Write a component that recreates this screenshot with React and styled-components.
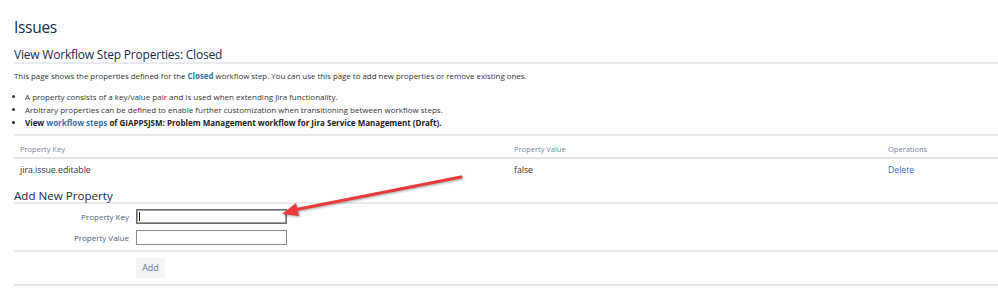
import React from 'react';
import styled, { createGlobalStyle } from 'styled-components';

const GlobalStyle = createGlobalStyle`
	html, body {
		margin: 0;
		padding: 0;
		background: #fff;
	}
	body {
		font-family: 'Open Sans', 'Noto Sans', sans-serif;
		color: #333;
	}
`;

const Page = styled.div`
	position: relative;
	padding: 17px 0 0 14px;
	width: 984px;
	height: 280px;
	overflow: hidden;
`;

const Title = styled.h1`
	margin: 0;
	font-size: 15.5px;
	line-height: 20px;
	letter-spacing: -0.3px;
	font-weight: 400;
	color: #172b4d;
`;

const SectionHeading = styled.h2`
	margin: 11px 0 0;
	font-size: 12px;
	line-height: 14px;
	letter-spacing: -0.2px;
	font-weight: 400;
	color: #172b4d;
	border-bottom: 2px solid #e9eaed;
`;

const Description = styled.p`
	margin: 6px 0 0;
	font-size: 7.9px;
	line-height: 12px;
`;

const Link = styled.a`
	color: #3572b0;
	font-weight: ${(p) => (p.bold ? 700 : 400)};
	text-decoration: none;
`;

const Notes = styled.ul`
	margin: 8px 0 0;
	padding: 0 0 0 11px;
	font-size: 8px;
	line-height: 13px;
`;

const Note = styled.li`
	font-weight: ${(p) => (p.strong ? 700 : 400)};
	color: ${(p) => (p.strong ? '#222' : '#333')};
`;

const Table = styled.table`
	margin-top: 5px;
	width: 984px;
	border-collapse: collapse;
	border-top: 2px solid #e9eaed;
`;

const HeadCell = styled.th`
	text-align: left;
	font-weight: 400;
	font-size: 7.5px;
	line-height: 11px;
	color: #7a869a;
	padding: 8px 6px 2px;
	border-bottom: 2px solid #e4e5e9;
`;

const Cell = styled.td`
	font-size: 8.7px;
	line-height: 13px;
	padding: 5px 6px 13px;
	vertical-align: top;
`;

const Subheading = styled.h3`
	margin: 0;
	font-size: 11.6px;
	line-height: 12px;
	font-weight: 400;
	color: #172b4d;
	border-bottom: 2px solid #e9eaed;
`;

const Form = styled.form`
	display: grid;
	grid-template-columns: 115px 151px;
	column-gap: 7px;
	row-gap: 6px;
	align-items: center;
	padding-top: 5px;
`;

const Label = styled.label`
	text-align: right;
	font-size: 8px;
	line-height: 12px;
	color: #505f79;
`;

const Field = styled.input`
	display: block;
	box-sizing: border-box;
	width: 151px;
	height: 15px;
	margin: 0;
	padding: 0 2px;
	font: inherit;
	border: 1px solid ${(p) => (p.focused ? '#6b6b6b' : '#8a8a8a')};
	box-shadow: ${(p) => (p.focused ? 'inset 0 0 0 1px #a0a0a0' : 'none')};
	outline: none;
	background: #fff;
`;

const Caret = styled.span`
	position: absolute;
	left: 3px;
	top: 3px;
	width: 1px;
	height: 9px;
	background: #222;
`;

const FieldWrap = styled.div`
	position: relative;
	height: 15px;
`;

const Divider = styled.div`
	margin-top: 5px;
	border-top: 2px solid #e9eaed;
`;

const Actions = styled.div`
	padding: 6px 0 6px 122px;
	border-bottom: 2px solid #e4e5e9;
	line-height: 0;
`;

const Button = styled.button`
	width: 29px;
	height: 20px;
	border: 0;
	border-radius: 2px;
	background: #f4f5f7;
	color: #6b778c;
	font-family: inherit;
	font-size: 9px;
	line-height: 20px;
	padding: 0;
`;

const Arrow = styled.svg`
	position: absolute;
	left: 0;
	top: 0;
	filter: drop-shadow(1px 1px 1px rgba(0, 0, 0, 0.35));
	pointer-events: none;
`;

export default function App() {
	return (
		<>
			<GlobalStyle />
			<Page>
				<Title>Issues</Title>
				<SectionHeading>View Workflow Step Properties: Closed</SectionHeading>
				<Description>
					This page shows the properties defined for the <Link bold>Closed</Link> workflow step. You can
					use this page to add new properties or remove existing ones.
				</Description>
				<Notes>
					<Note>A property consists of a key/value pair and is used when extending Jira functionality.</Note>
					<Note>
						Arbitrary properties can be defined to enable further customization when transitioning between
						workflow steps.
					</Note>
					<Note strong>
						View <Link bold>workflow steps</Link> of GIAPPSJSM: Problem Management workflow for Jira Service
						Management (Draft).
					</Note>
				</Notes>
				<Table>
					<colgroup>
						<col style={{ width: 494 }} />
						<col style={{ width: 374 }} />
						<col />
					</colgroup>
					<thead>
						<tr>
							<HeadCell>Property Key</HeadCell>
							<HeadCell>Property Value</HeadCell>
							<HeadCell>Operations</HeadCell>
						</tr>
					</thead>
					<tbody>
						<tr>
							<Cell>jira.issue.editable</Cell>
							<Cell>false</Cell>
							<Cell>
								<Link>Delete</Link>
							</Cell>
						</tr>
					</tbody>
				</Table>
				<Subheading>Add New Property</Subheading>
				<Form onSubmit={(e) => e.preventDefault()}>
					<Label htmlFor="propertyKey">Property Key</Label>
					<FieldWrap>
						<Field id="propertyKey" focused />
						<Caret />
					</FieldWrap>
					<Label htmlFor="propertyValue">Property Value</Label>
					<FieldWrap>
						<Field id="propertyValue" />
					</FieldWrap>
				</Form>
				<Divider />
				<Actions>
					<Button type="button">Add</Button>
				</Actions>
				<Arrow width="998" height="297" viewBox="0 0 998 297">
					<line x1="461" y1="177" x2="294" y2="210" stroke="#e8393b" strokeWidth="3" strokeLinecap="round" />
					<polygon points="282,214 296,203 299,216" fill="#e8393b" />
				</Arrow>
			</Page>
		</>
	);
}
